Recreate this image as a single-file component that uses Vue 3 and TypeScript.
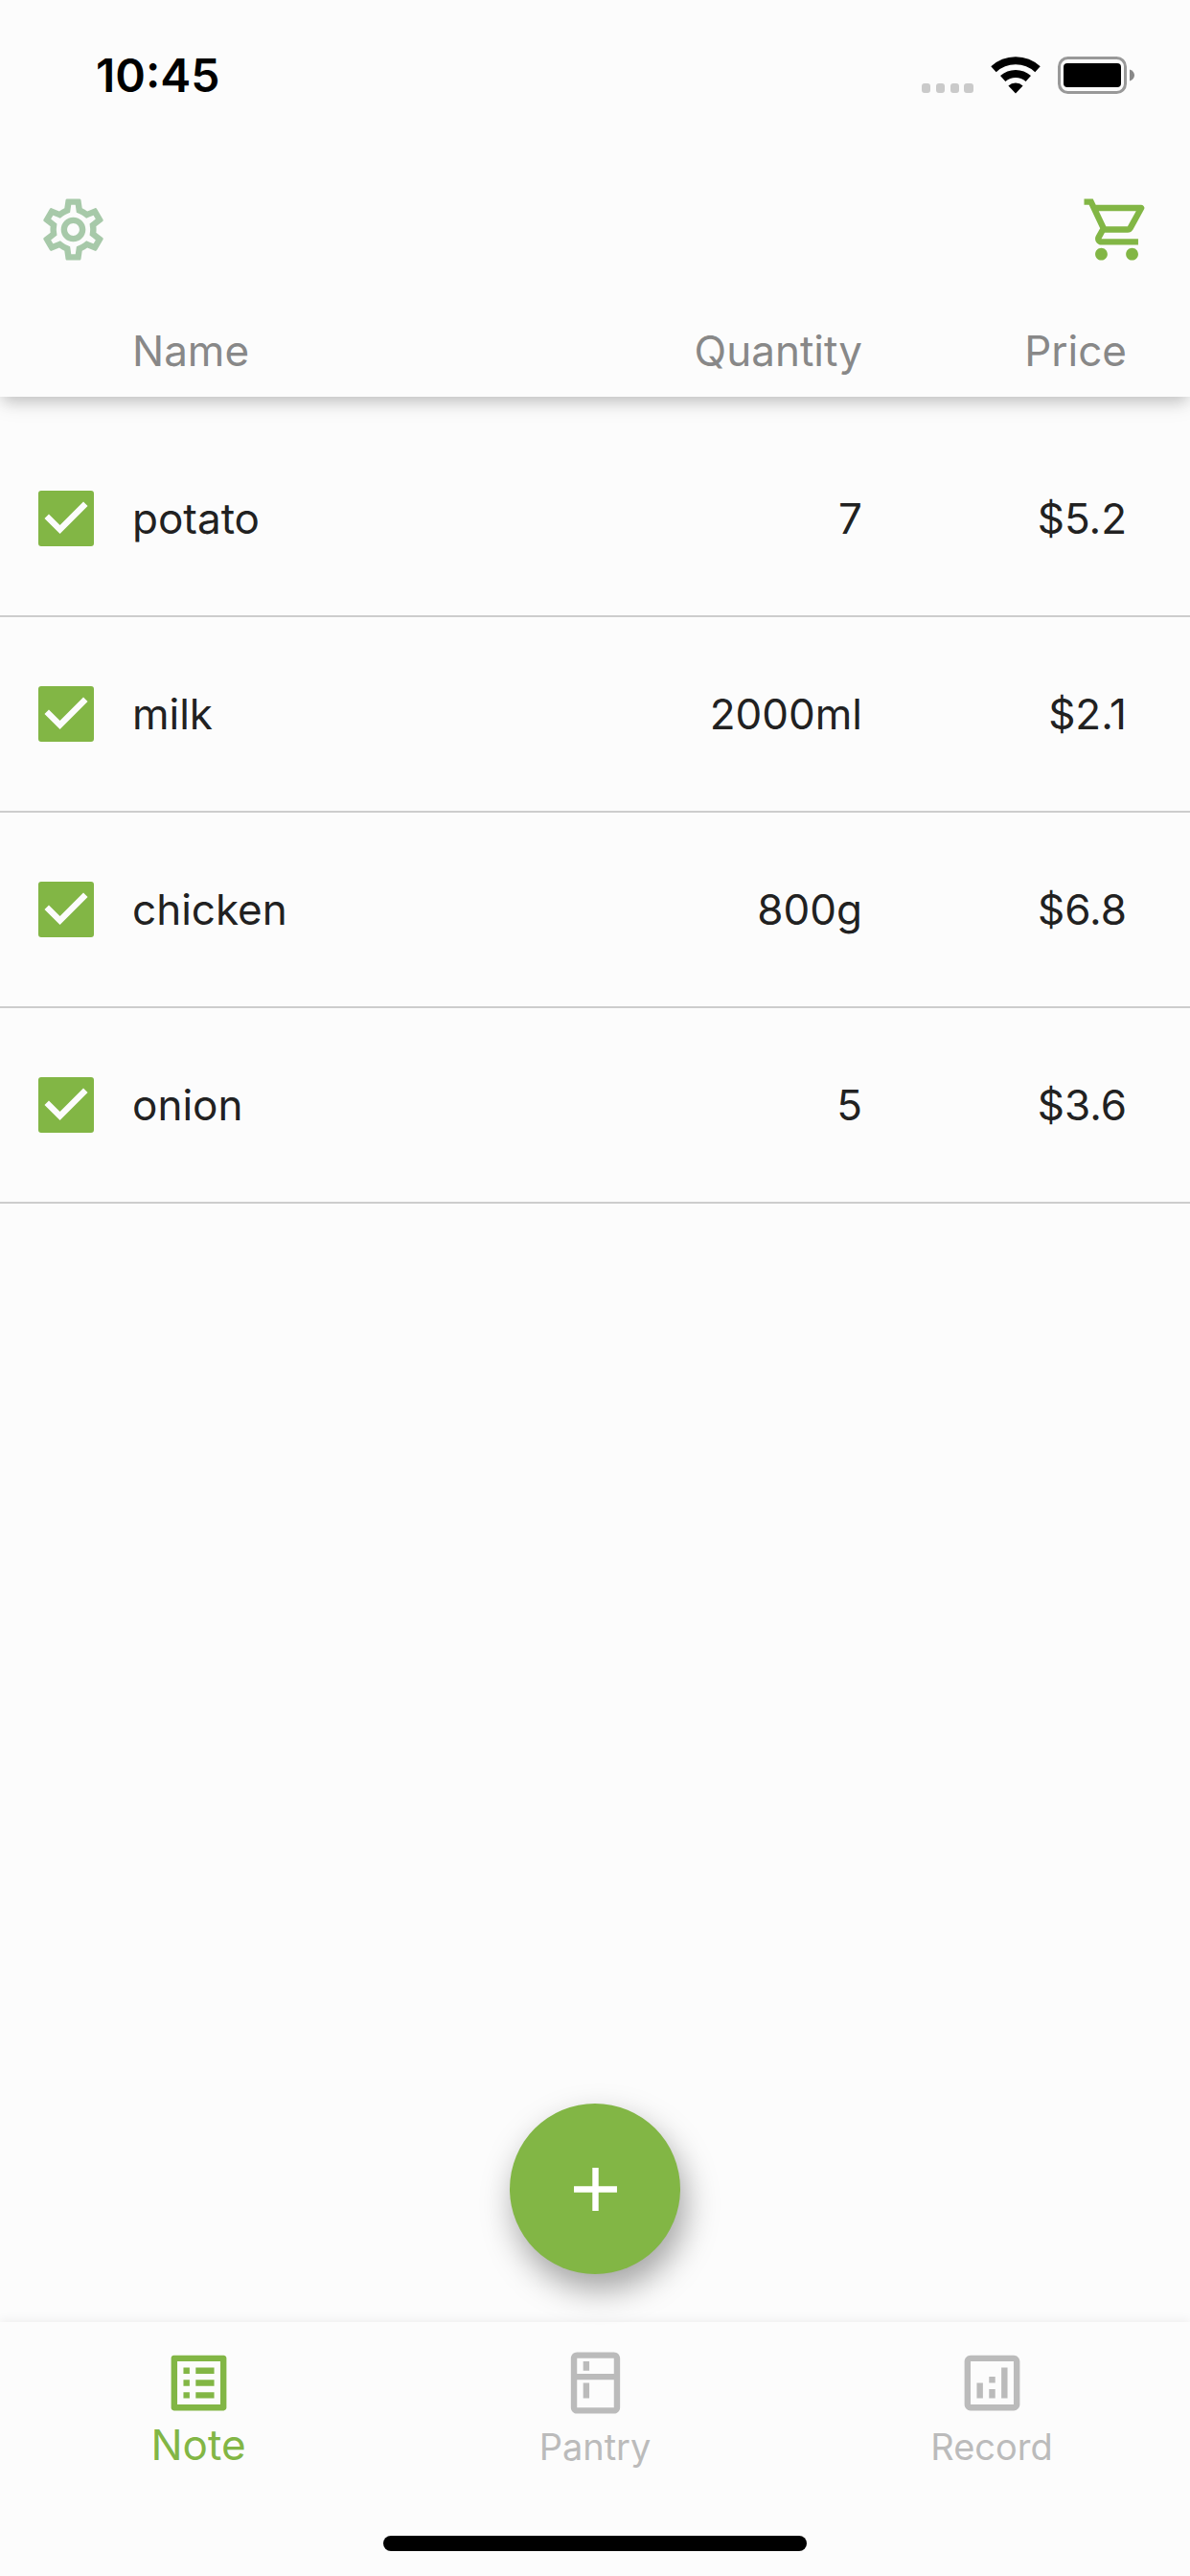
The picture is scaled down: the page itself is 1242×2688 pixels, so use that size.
<script setup lang="ts">
import { ref } from 'vue'

interface Item {
  id: number
  name: string
  quantity: string
  price: string
  done: boolean
}

interface Tab {
  label: string
  icon: string
}

const items = ref<Item[]>([
  { id: 1, name: 'potato', quantity: '7', price: '$5.2', done: true },
  { id: 2, name: 'milk', quantity: '2000ml', price: '$2.1', done: true },
  { id: 3, name: 'chicken', quantity: '800g', price: '$6.8', done: true },
  { id: 4, name: 'onion', quantity: '5', price: '$3.6', done: true },
])

const tabs: Tab[] = [
  {
    label: 'Note',
    icon: 'M11 7h6v2h-6zm0 4h6v2h-6zm0 4h6v2h-6zM7 7h2v2H7zm0 4h2v2H7zm0 4h2v2H7zM20.1 3H3.9c-.5 0-.9.4-.9.9v16.2c0 .4.4.9.9.9h16.2c.4 0 .9-.5.9-.9V3.9c0-.5-.5-.9-.9-.9zM19 19H5V5h14v14z',
  },
  {
    label: 'Pantry',
    icon: 'M18 2.01L6 2c-1.1 0-2 .89-2 2v16c0 1.1.9 2 2 2h12c1.1 0 2-.9 2-2V4c0-1.11-.9-1.99-2-1.99zM18 20H6v-9.02h12V20zm0-11H6V4h12v5zM8 5h2v3H8zm0 7h2v5H8z',
  },
  {
    label: 'Record',
    icon: 'M19 3H5c-1.1 0-2 .9-2 2v14c0 1.1.9 2 2 2h14c1.1 0 2-.9 2-2V5c0-1.1-.9-2-2-2zm0 16H5V5h14v14zM7 12h2v5H7zm8-5h2v10h-2zm-4 7h2v3h-2zm0-4h2v2h-2z',
  },
]

const activeTab = ref('Note')
</script>

<template>
  <div class="app">
    <div class="status">
      <span class="clock">10:45</span>
      <div class="indicators">
        <svg class="dots" viewBox="0 0 54 40" aria-hidden="true">
          <rect x="0" y="28" width="9" height="10" rx="3" />
          <rect x="15" y="28" width="9" height="10" rx="3" />
          <rect x="30" y="28" width="9" height="10" rx="3" />
          <rect x="44" y="28" width="10" height="10" rx="3" />
        </svg>
        <svg class="wifi" viewBox="0 0 52 40" aria-hidden="true">
          <path class="arc" d="M3 13.200a34 34 0 0 1 46 0" />
          <path class="arc" d="M12.7 23a20 20 0 0 1 26.6 0" />
          <path d="M26 38.500l-7.6-8a11 11 0 0 1 15.2 0z" />
        </svg>
        <svg class="battery" viewBox="0 0 80 40" aria-hidden="true">
          <rect class="shell" x="1.5" y="1.5" width="69" height="36" rx="9" />
          <rect x="6" y="7" width="60" height="25" rx="4" />
          <path class="tip" d="M75 13.5c3.5 1 5 3.5 5 6s-1.5 5-5 6z" />
        </svg>
      </div>
    </div>

    <header class="toolbar">
      <button class="tool settings" type="button" aria-label="Settings">
        <svg viewBox="0 0 24 24" aria-hidden="true">
          <path d="M19.43 12.98c.04-.32.07-.64.07-.98 0-.34-.03-.66-.07-.98l2.11-1.65c.19-.15.24-.42.12-.64l-2-3.46c-.09-.16-.26-.25-.44-.25-.06 0-.12.01-.17.03l-2.49 1c-.52-.4-1.08-.73-1.69-.98l-.38-2.65C14.46 2.18 14.25 2 14 2h-4c-.25 0-.46.18-.49.42l-.38 2.65c-.61.25-1.17.59-1.69.98l-2.49-1c-.06-.02-.12-.03-.18-.03-.17 0-.34.09-.43.25l-2 3.46c-.13.22-.07.49.12.64l2.11 1.65c-.04.32-.07.65-.07.98 0 .33.03.66.07.98l-2.11 1.65c-.19.15-.24.42-.12.64l2 3.46c.09.16.26.25.44.25.06 0 .12-.01.17-.03l2.49-1c.52.4 1.08.73 1.69.98l.38 2.65c.03.24.24.42.49.42h4c.25 0 .46-.18.49-.42l.38-2.65c.61-.25 1.17-.59 1.69-.98l2.49 1c.06.02.12.03.18.03.17 0 .34-.09.43-.25l2-3.46c.12-.22.07-.49-.12-.64l-2.11-1.65zm-1.98-1.71c.04.31.05.52.05.73 0 .21-.02.43-.05.73l-.14 1.13.89.7 1.08.84-.7 1.21-1.27-.51-1.04-.42-.9.68c-.43.32-.84.56-1.25.73l-1.06.43-.16 1.13-.2 1.35h-1.4l-.19-1.35-.16-1.13-1.06-.43c-.43-.18-.83-.41-1.23-.71l-.91-.7-1.06.43-1.27.51-.7-1.21 1.08-.84.89-.7-.14-1.13c-.03-.31-.05-.54-.05-.74s.02-.43.05-.73l.14-1.13-.89-.7-1.08-.84.7-1.21 1.27.51 1.04.42.9-.68c.43-.32.84-.56 1.25-.73l1.06-.43.16-1.13.2-1.35h1.39l.19 1.35.16 1.13 1.06.43c.43.18.83.41 1.23.71l.91.7 1.06-.43 1.27-.51.7 1.21-1.07.85-.89.7.14 1.13zM12 8c-2.21 0-4 1.79-4 4s1.79 4 4 4 4-1.79 4-4-1.79-4-4-4zm0 6c-1.1 0-2-.9-2-2s.9-2 2-2 2 .9 2 2-.9 2-2 2z" />
        </svg>
      </button>
      <button class="tool cart" type="button" aria-label="Shopping cart">
        <svg viewBox="0 0 24 24" aria-hidden="true">
          <path d="M15.55 13c.75 0 1.41-.41 1.75-1.03l3.58-6.49A.996.996 0 0 0 20.01 4H5.21l-.94-2H1.4v2H3l3.6 7.59-1.35 2.44C4.52 15.37 5.48 17 7 17h12v-2H7l1.1-2h7.45zM6.16 6h12.15l-2.76 5H8.53L6.16 6zM7 18c-1.1 0-1.99.9-1.99 2S5.9 22 7 22s2-.9 2-2-.9-2-2-2zm10 0c-1.1 0-1.99.9-1.99 2s.89 2 1.99 2 2-.9 2-2-.9-2-2-2z" />
        </svg>
      </button>
    </header>

    <main class="content">
      <table class="list">
        <thead>
          <tr>
            <td></td>
            <th scope="col">Name</th>
            <th scope="col" class="num">Quantity</th>
            <th scope="col" class="num">Price</th>
          </tr>
        </thead>
        <tbody>
          <tr v-for="item in items" :key="item.id">
            <td>
              <span class="check">
                <input v-model="item.done" type="checkbox" :aria-labelledby="`item-${item.id}`" />
                <svg v-if="item.done" viewBox="3 3 18 18" aria-hidden="true">
                  <path d="M10 17l-5-5 1.41-1.41L10 14.17l7.59-7.59L19 8z" />
                </svg>
              </span>
            </td>
            <td :id="`item-${item.id}`">{{ item.name }}</td>
            <td class="num">{{ item.quantity }}</td>
            <td class="num">{{ item.price }}</td>
          </tr>
        </tbody>
      </table>

      <button class="fab" type="button" aria-label="Add item">
        <svg viewBox="0 0 24 24" aria-hidden="true">
          <path d="M19 13h-6v6h-2v-6H5v-2h6V5h2v6h6z" />
        </svg>
      </button>
    </main>

    <footer class="bottom">
      <nav class="tabs">
        <button
          v-for="tab in tabs"
          :key="tab.label"
          class="tab"
          :class="{ active: tab.label === activeTab }"
          type="button"
          @click="activeTab = tab.label"
        >
          <svg viewBox="0 0 24 24" aria-hidden="true"><path :d="tab.icon" /></svg>
          <span class="label"><span class="caption">{{ tab.label }}</span></span>
        </button>
      </nav>
      <div class="home"></div>
    </footer>
  </div>
</template>

<style>
body {
  margin: 0;
  background: #fcfcfc;
}
</style>

<style scoped>
.app {
  --green: #82b645;
  display: flex;
  flex-direction: column;
  min-height: 100vh;
  background: #fcfcfc;
  color: #212121;
  font-family: Inter, Roboto, sans-serif;
  font-size: 44px;
  line-height: 52px;
}

button {
  padding: 0;
  border: 0;
  background: none;
  color: inherit;
  font: inherit;
  cursor: pointer;
}

svg {
  display: block;
  fill: currentColor;
}

.status {
  display: flex;
  align-items: center;
  justify-content: space-between;
  height: 158px;
  padding: 0 58px 0 100px;
  color: #000;
}

.clock {
  font-size: 48px;
  font-weight: 600;
}

.indicators {
  display: flex;
  gap: 18px;
}

.indicators svg {
  height: 40px;
}

.dots {
  width: 54px;
  color: #cacaca;
}

.wifi {
  width: 52px;
}

.arc {
  fill: none;
  stroke: #000;
  stroke-width: 8px;
}

.battery {
  width: 80px;
}

.shell {
  fill: none;
  stroke: #999;
  stroke-width: 3px;
}

.tip {
  fill: #888;
}

.toolbar {
  display: flex;
  align-items: center;
  justify-content: space-between;
  height: 162px;
  padding: 0 38px;
}

.tool svg {
  width: 77px;
  height: 77px;
}

.settings {
  color: #a7c9a9;
}

.cart {
  color: var(--green);
}

.content {
  display: flex;
  flex: 1;
  flex-direction: column;
  align-items: center;
}

.list,
.list thead,
.list tbody {
  display: block;
  width: 100%;
}

.list thead {
  margin-bottom: 26px;
  box-shadow: 0 8px 14px -4px rgba(0, 0, 0, 0.16), 0 8px 20px rgba(0, 0, 0, 0.1);
  clip-path: inset(0 0 -60px 0);
}

.list tr {
  display: grid;
  grid-template-columns: 98px 5fr 4fr 276px;
  align-items: center;
  padding: 0 66px 0 40px;
}

.list thead tr {
  box-sizing: border-box;
  height: 94px;
  padding-bottom: 2px;
}

.list tbody tr {
  box-sizing: border-box;
  height: 204px;
  border-bottom: 2px solid #cdcdcd;
}

.list th,
.list td {
  padding: 0;
  text-align: left;
}

.list th {
  color: #888;
  font-weight: 400;
}

.list .num {
  text-align: right;
}

.check {
  display: block;
  position: relative;
  width: 58px;
  height: 58px;
}

.check input {
  display: block;
  box-sizing: border-box;
  width: 58px;
  height: 58px;
  margin: 0;
  border: 6px solid var(--green);
  border-radius: 3px;
  appearance: none;
}

.check input:checked {
  background: var(--green);
}

.check svg {
  position: absolute;
  inset: 0;
  color: #fcfcfc;
  pointer-events: none;
}

.fab {
  display: flex;
  align-items: center;
  justify-content: center;
  width: 178px;
  height: 178px;
  margin: auto 0 50px;
  border-radius: 50%;
  background: var(--green);
  color: #fff;
  box-shadow: 5px 16px 34px rgba(0, 0, 0, 0.36);
}

.fab svg {
  width: 77px;
  height: 77px;
}

.bottom {
  box-shadow: 0 -2px 10px rgba(0, 0, 0, 0.06);
}

.tabs {
  display: flex;
}

.tab {
  display: flex;
  flex: 1;
  flex-direction: column;
  align-items: center;
  padding-top: 25px;
  color: #bbb;
}

.tab svg {
  width: 77px;
  height: 77px;
}

/* Captions of both sizes sit on the one baseline. */
.label {
  display: block;
}

.caption {
  font-size: 38px;
}

.active {
  color: var(--green);
}

.active .caption {
  font-size: 44px;
}

.home {
  width: 442px;
  height: 16px;
  margin: 67px auto 26px;
  border-radius: 8px;
  background: #000;
}
</style>
